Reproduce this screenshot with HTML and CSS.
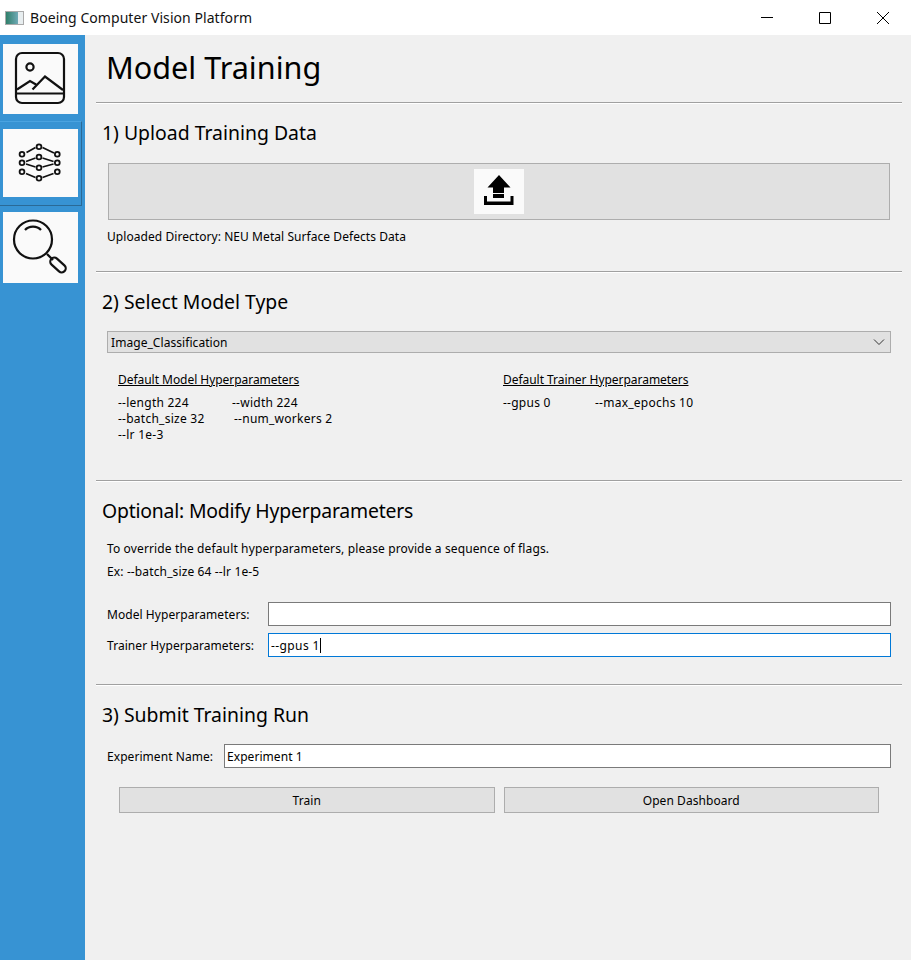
FILE: index.html
```html
<!DOCTYPE html>
<html lang="en">
<head>
    <meta charset="UTF-8">
    <meta name="viewport" content="width=device-width, initial-scale=1.0">
    <title>Boeing Computer Vision Platform</title>
    <link rel="stylesheet" href="styles.css">
</head>
<body>
    <header class="titlebar">
        <span class="app-icon"></span>
        <span class="app-name">Boeing Computer Vision Platform</span>
        <div class="window-controls">
            <svg width="12" height="12" viewBox="0 0 12 12"><path d="M0 5.500H12" stroke="#000" fill="none"/></svg>
            <svg width="12" height="12" viewBox="0 0 12 12"><path d="M0.500 0.500H11.500V11.500H0.500Z" stroke="#000" fill="none"/></svg>
            <svg width="12" height="12" viewBox="0 0 12 12"><path d="M0 0L12 12M12 0L0 12" stroke="#000" fill="none"/></svg>
        </div>
    </header>

    <div class="app">
        <nav class="sidebar">
            <div class="nav-item nav-first">
                <button class="nav-btn nav-btn-a">
                    <svg width="75" height="70" viewBox="0 0 75 70" fill="none" stroke="#111" stroke-width="2.200">
                        <rect x="13" y="9" width="48" height="50" rx="6"/>
                        <circle cx="27" cy="23" r="3.600"/>
                        <path d="M14 45.500L27 37L33 40.500M29.500 45.500L42 32.500L60 46M13 49.500H61"/>
                    </svg>
                </button>
            </div>
            <div class="nav-item nav-selected">
                <button class="nav-btn nav-btn-b">
                    <svg width="75" height="68" viewBox="0 0 75 68" fill="none" stroke="#111" stroke-width="1.800">
                        <path d="M23.500 23.500L32.500 18.500M39.500 18.500L51 24M23 32.500L32.500 29M39.500 29L50.500 32.500M23 35L32.500 38M39.500 38L50.500 35M23 44.500L32.500 48.500M39.500 48.500L50.500 44.500"/>
                        <circle cx="19" cy="25.300" r="2.400"/>
                        <circle cx="19" cy="33.700" r="2.400"/>
                        <circle cx="19" cy="42.700" r="2.400"/>
                        <circle cx="36" cy="17.700" r="2.400"/>
                        <circle cx="36" cy="28" r="2.400"/>
                        <circle cx="36" cy="38.700" r="2.400"/>
                        <circle cx="36" cy="49.300" r="2.400"/>
                        <circle cx="54.300" cy="25.300" r="2.400"/>
                        <circle cx="54.300" cy="33.700" r="2.400"/>
                        <circle cx="54.300" cy="42.700" r="2.400"/>
                    </svg>
                </button>
            </div>
            <div class="nav-item nav-last">
                <button class="nav-btn nav-btn-c">
                    <svg width="75" height="71" viewBox="0 0 75 71" fill="none" stroke="#111" stroke-width="2.200">
                        <circle cx="30" cy="27.500" r="19"/>
                        <path d="M22 18C26 13.500 34 13.500 38 18"/>
                        <path d="M44 42L50 48"/>
                        <rect x="-9" y="-4" width="18" height="8" rx="4" transform="translate(55 53) rotate(42)"/>
                    </svg>
                </button>
            </div>
        </nav>

        <main class="content">
            <h1 class="page-title">Model Training</h1>

            <section class="section section-upload">
                <h2>1) Upload Training Data</h2>
                <div class="upload-btn">
                    <span class="upload-icon">
                        <svg width="50" height="45" viewBox="0 0 50 45">
                            <path d="M25 6L36.500 18.500H30V24H19V18.500H13.500Z" fill="#000"/>
                            <path d="M19 25H30V29H19Z" fill="#000"/>
                            <path d="M10 27H13V32.500H36.500V27H39.500V36H10Z" fill="#000"/>
                        </svg>
                    </span>
                </div>
                <p class="upload-note">Uploaded Directory: NEU Metal Surface Defects Data</p>
            </section>

            <section class="section section-model">
                <h2>2) Select Model Type</h2>
                <div class="combo">
                    <span>Image_Classification</span>
                    <svg width="12" height="8" viewBox="0 0 12 8"><path d="M1 1.500L6 6.500L11 1.500" stroke="#333" fill="none"/></svg>
                </div>
                <div class="defaults">
                    <div class="defaults-col">
                        <h3>Default Model Hyperparameters</h3>
                        <div class="param-row"><span class="param-a">--length 224</span><span>--width 224</span></div>
                        <div class="param-row"><span class="param-b">--batch_size 32</span><span>--num_workers 2</span></div>
                        <div class="param-row"><span>--lr 1e-3</span></div>
                    </div>
                    <div class="defaults-col">
                        <h3>Default Trainer Hyperparameters</h3>
                        <div class="param-row"><span class="param-c">--gpus 0</span><span>--max_epochs 10</span></div>
                    </div>
                </div>
            </section>

            <section class="section section-optional">
                <h2 class="heading-tight">Optional: Modify Hyperparameters</h2>
                <p class="hint">To override the default hyperparameters, please provide a sequence of flags.</p>
                <p class="hint hint-example">Ex: --batch_size 64 --lr 1e-5</p>
                <div class="form-row form-row-first">
                    <label class="label-wide">Model Hyperparameters:</label>
                    <div class="field"></div>
                </div>
                <div class="form-row">
                    <label class="label-wide">Trainer Hyperparameters:</label>
                    <div class="field field-focus">--gpus 1<span class="caret"></span></div>
                </div>
            </section>

            <section class="section section-submit">
                <h2>3) Submit Training Run</h2>
                <div class="form-row">
                    <label class="label-narrow">Experiment Name:</label>
                    <div class="field">Experiment 1</div>
                </div>
                <div class="actions">
                    <button class="action-btn">Train</button>
                    <button class="action-btn">Open Dashboard</button>
                </div>
            </section>
        </main>
    </div>
</body>
</html>
```

FILE: styles.css
```css
html, body {
    margin: 0;
    padding: 0;
}
body {
    width: 911px;
    height: 960px;
    overflow: hidden;
    background-color: #f0f0f0;
    color: #000;
    font-family: "Noto Sans", "Open Sans", sans-serif;
    font-size: 12px;
    letter-spacing: 0.06px;
}
.titlebar {
    height: 35px;
    background-color: #fff;
    display: flex;
    align-items: center;
    padding-left: 5px;
}
.app-icon {
    width: 17px;
    height: 12px;
    border: 1px solid #aaa;
    background: linear-gradient(90deg, #2f7f6a, #6fa9b5 70%, #e8eef0 72%);
    margin-right: 6px;
}
.app-name {
    font-size: 14px;
    color: #111;
}
.window-controls {
    margin-left: auto;
    display: flex;
    gap: 46px;
    padding-right: 22px;
}
.window-controls svg {
    display: block;
}
.app {
    display: flex;
    height: 925px;
}
.sidebar {
    width: 85px;
    flex: none;
    background-color: #3793d3;
    box-sizing: border-box;
}
.nav-item {
    width: 82px;
    box-sizing: border-box;
    padding-left: 3px;
}
.nav-first {
    height: 86px;
    padding-top: 9px;
}
.nav-selected {
    height: 85px;
    padding-top: 7px;
    border-top: 1px solid #4aa3e0;
    border-right: 1px solid #2a6a96;
    border-bottom: 1px solid #2a6a96;
}
.nav-last {
    padding-top: 6px;
}
.nav-btn {
    display: block;
    width: 75px;
    padding: 0;
    border: none;
    background-color: #fafafa;
}
.nav-btn svg {
    display: block;
}
.nav-btn-a {
    height: 70px;
}
.nav-btn-b {
    height: 68px;
}
.nav-btn-c {
    height: 71px;
}
.content {
    flex: 1;
    padding: 0 9px 0 11px;
}
.page-title {
    margin: 0;
    height: 67px;
    line-height: 64px;
    padding-left: 10px;
    font-size: 30.6px;
    font-weight: normal;
    letter-spacing: 0;
    box-sizing: border-box;
}
.section {
    border-top: 1px solid #a0a0a0;
    box-shadow: inset 0 1px 0 #fff;
    box-sizing: border-box;
    padding-top: 16px;
}
.section h2 {
    margin: 0 0 0 6px;
    height: 28px;
    line-height: 28px;
    font-size: 19.4px;
    font-weight: normal;
    letter-spacing: 0;
}
.section .heading-tight {
    letter-spacing: -0.2px;
}
.section-upload {
    height: 169px;
}
.section-model {
    height: 209px;
}
.section-optional {
    height: 204px;
}
.upload-btn {
    margin: 16px 12px 0 12px;
    height: 57px;
    box-sizing: border-box;
    background-color: #e1e1e1;
    border: 1px solid #adadad;
    display: flex;
    justify-content: center;
    align-items: center;
}
.upload-icon {
    display: block;
    width: 50px;
    height: 45px;
    background-color: #fafafa;
}
.upload-icon svg {
    display: block;
}
.upload-note {
    margin: 8px 0 0 11px;
    line-height: 18px;
}
.combo {
    margin: 15px 11px 0 11px;
    height: 22px;
    box-sizing: border-box;
    padding: 0 5px 0 3px;
    background-color: #e1e1e1;
    border: 1px solid #adadad;
    display: flex;
    justify-content: space-between;
    align-items: center;
}
.defaults {
    display: flex;
    margin-top: 18px;
    padding-left: 22px;
}
.defaults-col {
    width: 385px;
}
.defaults-col h3 {
    margin: 0 0 6px 0;
    font-size: 12px;
    line-height: 18px;
    font-weight: normal;
    letter-spacing: -0.04px;
    text-decoration: underline;
}
.param-row {
    display: flex;
    line-height: 16px;
    letter-spacing: 0.25px;
}
.param-a {
    width: 114px;
}
.param-b {
    width: 116px;
}
.param-c {
    width: 92px;
}
.hint {
    margin: 15px 0 0 11px;
    line-height: 18px;
    letter-spacing: 0.13px;
}
.hint-example {
    margin-top: 5px;
}
.form-row {
    display: flex;
    align-items: center;
    margin: 7px 11px 0 11px;
}
.form-row-first {
    margin-top: 21px;
}
.label-wide {
    width: 161px;
    flex: none;
}
.label-narrow {
    width: 117px;
    flex: none;
}
.field {
    flex: 1;
    height: 24px;
    box-sizing: border-box;
    padding: 1px 0 0 2px;
    background-color: #fff;
    border: 1px solid #7a7a7a;
    display: flex;
    align-items: center;
}
.field-focus {
    border-color: #0078d7;
    letter-spacing: 0.4px;
}
.caret {
    display: block;
    width: 1px;
    height: 15px;
    background-color: #000;
}
.section-submit .form-row {
    margin-top: 15px;
}
.actions {
    display: flex;
    gap: 9px;
    margin: 19px 23px 0 23px;
}
.action-btn {
    flex: 1;
    height: 26px;
    padding: 0;
    background-color: #e1e1e1;
    border: 1px solid #adadad;
    font-family: inherit;
    font-size: 12px;
    letter-spacing: inherit;
    color: #000;
}
```
